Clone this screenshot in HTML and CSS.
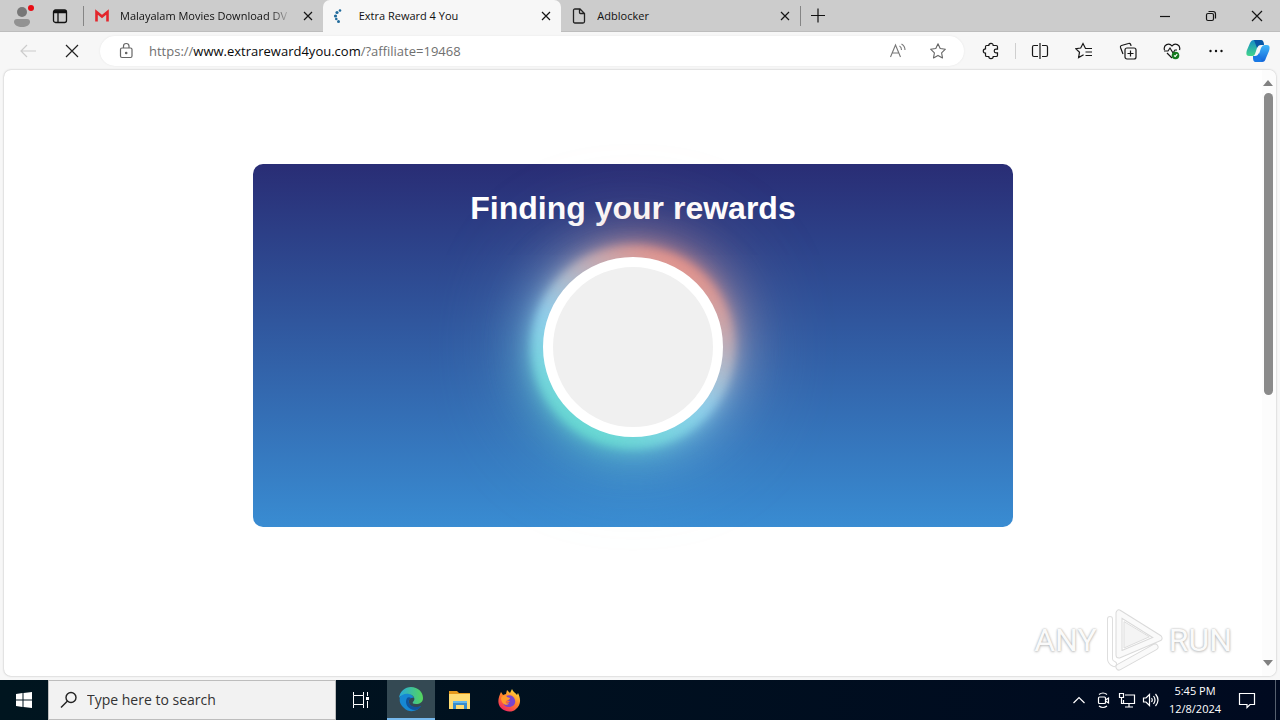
FILE: index.html
```html
<!DOCTYPE html>
<html lang="en">
<head>
<meta charset="utf-8">
<title>Extra Reward 4 You</title>
<link rel="stylesheet" href="styles.css">
</head>
<body>
<header class="tabbar">
  <button class="profile" aria-label="Profile"><svg width="28" height="28" viewBox="0 0 28 28"><circle cx="13" cy="10" r="5" fill="#777"/><path d="M5 20q0-3 3-3h10q3 0 3 3c0 3-4 5-8 5s-8-2-8-5z" fill="#929292"/><circle cx="22" cy="6" r="3" fill="#e80c14"/></svg></button>
  <button class="workspaces" aria-label="Tab actions"><svg width="16" height="16" viewBox="0 0 16 16" fill="none" stroke="#111" stroke-width="1.3"><rect x="1.5" y="2" width="13" height="12.500" rx="2"/><path d="M2 4.500h12M6 5v9" /><path d="M2 3.200h12" stroke-width="2"/></svg></button>
  <span class="divider"></span>
  <nav class="tabs">
    <div class="tab first">
      <svg class="favicon" width="16" height="16" viewBox="0 0 16 16"><path d="M2.500 13.500V4l5.500 4.500L13.500 4v9.500" fill="none" stroke="#e3262c" stroke-width="2.600"/></svg>
      <a class="tab-title faded" href="#">Malayalam Movies Download DV</a>
      <button class="close" aria-label="Close tab"><svg width="10" height="10" viewBox="0 0 10 10"><path d="M1 1l8 8M9 1L1 9"/></svg></button>
    </div>
    <div class="tab active">
      <svg class="favicon" width="16" height="16" viewBox="0 0 16 16" fill="#216b9c"><circle cx="7" cy="2.500" r="1.300"/><circle cx="4" cy="4.500" r="1.600"/><circle cx="2.500" cy="8" r="1.600"/><circle cx="3.300" cy="11" r="1.300"/><circle cx="5.500" cy="13.500" r="1.500"/></svg>
      <a class="tab-title" href="#">Extra Reward 4 You</a>
      <button class="close" aria-label="Close tab"><svg width="10" height="10" viewBox="0 0 10 10"><path d="M1 1l8 8M9 1L1 9"/></svg></button>
    </div>
    <div class="tab last">
      <svg class="favicon" width="16" height="16" viewBox="0 0 16 16" fill="none" stroke="#222" stroke-width="1.300"><path d="M2.500 2.500q0-1.500 1.500-1.500h5l4.500 4.500v8q0 1.500-1.500 1.500h-8q-1.500 0-1.500-1.500zM8.500 1v3.500q0 1 1 1h4"/></svg>
      <a class="tab-title" href="#">Adblocker</a>
      <button class="close" aria-label="Close tab"><svg width="10" height="10" viewBox="0 0 10 10"><path d="M1 1l8 8M9 1L1 9"/></svg></button>
    </div>
  </nav>
  <span class="divider"></span>
  <button class="newtab" aria-label="New tab"><svg width="16" height="16" viewBox="0 0 16 16" stroke="#111" stroke-width="1.200"><path d="M1 7.500h14M8 .5v14"/></svg></button>
  <div class="window-buttons">
    <button aria-label="Minimize"><svg width="12" height="12" viewBox="0 0 12 12"><path d="M1 6.500h10"/></svg></button>
    <button aria-label="Restore"><svg width="12" height="12" viewBox="0 0 12 12"><rect x="1.500" y="3.500" width="7" height="7" rx="1.500"/><path d="M3.500 1.500h4.500q2.500 0 2.500 2.500v4.500"/></svg></button>
    <button aria-label="Close"><svg width="12" height="12" viewBox="0 0 12 12"><path d="M1 1l10 10M11 1L1 11"/></svg></button>
  </div>
</header>

<div class="toolbar">
  <button class="nav-button" aria-label="Back"><svg width="18" height="16" viewBox="0 0 18 16" fill="none" stroke="#ccc" stroke-width="1.200"><path d="M17 8H2M8 2L2 8l6 6"/></svg></button>
  <button class="nav-button" aria-label="Stop"><svg width="14" height="14" viewBox="0 0 14 14" stroke="#222" stroke-width="1.200"><path d="M1 1l12 12M13 1L1 13"/></svg></button>
  <div class="address">
    <svg width="16" height="18" viewBox="0 0 16 18" fill="none" stroke="#666" stroke-width="1.200"><rect x="2.500" y="6" width="11.500" height="9.500" rx="1.500"/><path d="M5.500 6V4q0-2.500 2.700-2.500T11 4v2"/><circle cx="8.200" cy="11" r=".7" fill="#555"/></svg>
    <a class="url" href="#">https://<span>www.extrareward4you.com</span>/?affiliate=19468</a>
    <button aria-label="Read aloud"><svg width="18" height="18" viewBox="0 0 18 18" fill="none" stroke="#777" stroke-width="1.100"><path d="M1.500 15L6.500 3l5 12M3.300 11h6.400M10.500 4q2 1 2 4M12.500 2q3.500 2 3.500 6"/></svg></button>
    <button aria-label="Add to favorites"><svg width="18" height="18" viewBox="0 0 18 18" fill="none" stroke="#666" stroke-width="1.100" stroke-linejoin="round"><path d="M9 1.800l2.200 4.700 5.200.7-3.800 3.600.9 5.100L9 13.400l-4.500 2.500.9-5.100-3.800-3.600 5.200-.7z"/></svg></button>
  </div>
  <div class="tools">
    <button aria-label="Extensions"><svg width="18" height="18" viewBox="0 0 18 18"><path d="M4.500 3.500h2.300a2.200 2.200 0 0 1 4.400 0h3q1.300 0 1.300 1.300v2.400h-1.500a1.800 1.800 0 0 0 0 3.600h1.500v2.400q0 1.300-1.300 1.300h-3a2.200 2.200 0 0 1-4.400 0H4.800q-1.300 0-1.300-1.300v-2a2.200 2.200 0 0 1 0-4.400v-2q0-1.300 1-1.300z"/></svg></button>
    <span class="tool-divider"></span>
    <button aria-label="Split screen"><svg width="18" height="18" viewBox="0 0 18 18"><path d="M7 3.500H3Q1.500 3.500 1.500 5v8q0 1.500 1.500 1.500h4M11 3.500h4q1.500 0 1.500 1.500v8q0 1.500-1.500 1.500h-4M9 1v16"/></svg></button>
    <button aria-label="Favorites"><svg width="18" height="18" viewBox="0 0 18 18"><path d="M12 6.500h-1.500L8 1.500 5.700 6l-5 .7 3.800 3.500-.9 5.300 5-2.800M10.500 6.500H17M10.500 10H17M10.500 13.500H17"/></svg></button>
    <button aria-label="Collections"><svg width="18" height="18" viewBox="0 0 18 18"><path d="M4 12L1.500 5.500q-.5-1.500 1-2l7-2q1.500-.5 2.200 1L12 4"/><rect x="6" y="6" width="11" height="11" rx="2"/><path d="M11.500 8.500v6M8.500 11.500h6"/></svg></button>
    <button aria-label="Browser essentials"><svg width="18" height="18" viewBox="0 0 18 18"><path d="M1.500 8C0 3 6 0 9 4c3-4 9-1 7.500 4M1 9h4l2-3 3 5 2-3h2M4 11l5 5"/><circle cx="12.500" cy="13.500" r="3.800" fill="#147a1e" stroke="none"/><path d="M11 13.500l1.200 1 2-2.300" stroke="#fff"/></svg></button>
    <button aria-label="Settings and more"><svg width="18" height="18" viewBox="0 0 18 18"><g fill="#111" stroke="none"><circle cx="3.500" cy="9" r="1.200"/><circle cx="9" cy="9" r="1.200"/><circle cx="14.500" cy="9" r="1.200"/></g></svg></button>
    <button class="copilot" aria-label="Copilot"><svg width="26" height="26" viewBox="0 0 26 26"><defs><linearGradient id="ca" x1="0" y1="0" x2="0" y2="1"><stop offset="0" stop-color="#148bc5"/><stop offset="1" stop-color="#42d68b"/></linearGradient><linearGradient id="cb" x1="0" y1="0" x2="0" y2="1"><stop offset="0" stop-color="#40b7fa"/><stop offset="1" stop-color="#1262d8"/></linearGradient></defs><path fill="url(#ca)" stroke="none" d="M9 2h8c-3 1-4 4-5 8l-2 6c-1 2-2 2-4 2H4c-3 0-3-3-2-6l3-7c1-2 2-3 4-3z"/><path fill="#0756a5" stroke="none" d="M9 2h7c2 0 3 2 3 5h-3c-2 0-3 1-4 3z"/><path fill="url(#cb)" stroke="none" d="M17 24H9c3-1 4-4 5-8l2-6c1-2 2-3 4-3h2c3 0 3 3 2 6l-3 7c-1 3-2 4-4 4z"/><path fill="#1979e5" stroke="none" d="M17 24h-6c-3 0-3-3-3-6h2c2 0 3-1 4-3z"/></svg></button>
  </div>
</div>

<div class="viewport">
  <main class="page">
    <section class="card">
      <h1>Finding your rewards</h1>
      <div class="loader"><span class="glow near"></span><span class="glow soft"></span><span class="glow wide"></span><span class="glow far"></span><span class="disc"></span></div>
    </section>
  </main>
  <div class="scrollbar">
    <svg width="10" height="6" viewBox="0 0 10 6"><path d="M0 6l5-6 5 6z"/></svg>
    <span class="track"><span class="thumb"></span></span>
    <svg width="10" height="6" viewBox="0 0 10 6"><path d="M0 0l5 6 5-6z"/></svg>
  </div>
  <div class="watermark"><span>ANY</span><svg width="60" height="66" viewBox="0 0 60 66"><g fill="none" stroke-linejoin="round" stroke-linecap="round"><path d="M7 12v40q0 3 4 5" stroke="#dedede" stroke-width="6"/><path d="M7 12v40q0 3 4 5" stroke="#fff" stroke-width="4"/><path d="M16 6v42l40-17zM16 60l36-20" stroke="#dadada" stroke-width="7"/><path d="M16 6v42l40-17zM16 60l36-20" stroke="#fafafa" stroke-width="5"/><path d="M21 15v26l25-11z" fill="#f4f4f4" stroke="#ddd"/></g></svg><span>RUN</span></div>
</div>

<footer class="taskbar">
  <button class="task start" aria-label="Start"><svg width="16" height="16" viewBox="0 0 16 16" fill="#fff"><path d="M0 2l6.500-1v6.500H0zM7.500 1L16 0v7.500H7.500zM0 8.500h6.500V15L0 14zM7.500 8.500H16V16l-8.500-1z"/></svg></button>
  <label class="search"><svg width="18" height="18" viewBox="0 0 18 18" fill="none" stroke="#222" stroke-width="1.400"><circle cx="11" cy="6.500" r="5"/><path d="M7.500 10L1 16.500"/></svg><input type="text" aria-label="Search" placeholder="Type here to search"></label>
  <button class="task view" aria-label="Task view"><svg width="18" height="18" viewBox="0 0 18 18" fill="none" stroke="#fff"><path d="M1.500 1v3.500h10V1M1.500 17v-3.500h10V17M1.500 4.500v9M11.500 4.500v9M15.500 1v4M15.500 10v7"/><path d="M14 6h3v3h-3z" fill="#fff" stroke="none"/></svg></button>
  <button class="task current" aria-label="Edge"><svg width="26" height="26" viewBox="0 0 26 26"><defs><linearGradient id="ea" x1="0" y1="0" x2="1" y2="0"><stop offset="0" stop-color="#27a9dd"/><stop offset="1" stop-color="#55d65b"/></linearGradient></defs><path fill="#1688d3" d="M2 11C5 5 13 6 16 12c-4-1-6 2-5 5 1 4 6 6 12 3-4 6-12 7-17 2-4-3-5-7-4-11z"/><path fill="#10549d" d="M9 12c-3 5 1 12 8 12 3 0 5-2 6-4-5 2-10 1-12-3-1-2 0-4 2-5-1-1-3-1-4 0z"/><path fill="url(#ea)" d="M1 12C2 5 7 1 13 1c7 0 12 5 12 11 0 4-3 6-7 6-3 0-4-1-3-2 3-3 1-7-4-8-4-1-8 1-10 4z"/></svg></button>
  <button class="task" aria-label="File Explorer"><svg width="24" height="24" viewBox="0 0 24 24"><path fill="#e69a1c" d="M1 3h8l2 2h11v3H1z"/><path fill="#ffdc73" d="M1 6h21v15H1z"/><path fill="#398dcc" d="M5 13h14v8h-3v-4H8v4H5z"/><path fill="#65b9ed" d="M5 13h14v2H5z"/></svg></button>
  <button class="task" aria-label="Firefox"><svg width="24" height="24" viewBox="0 0 24 24"><defs><linearGradient id="fa" x1=".8" y1="0" x2=".2" y2="1"><stop offset="0" stop-color="#ffe13c"/><stop offset=".5" stop-color="#ff7d2a"/><stop offset="1" stop-color="#f01c68"/></linearGradient></defs><path fill="url(#fa)" d="M4 4l2 3 3-1 1-4 3 3 2-4c1 3 4 4 5 6l1-2c3 6 3 12-2 16-4 4-11 3-15-1-4-4-3-10 0-16z"/><path fill="#7944cc" d="M9 8c4-2 8 0 9 4s-2 7-6 7-6-2-5-5c2 2 5 1 6-1-3 0-5-1-4-5z"/><path fill="#ff9c2c" d="M4 10c2-3 5-3 6-1l3 1c0 2-3 2-4 3-1 2 1 3 3 2-2 4-8 1-8-5z"/></svg></button>
  <div class="tray">
    <button class="tray-icon" aria-label="Show hidden icons"><svg width="14" height="18" viewBox="0 0 14 18"><path d="M1.500 12L7 6.500l5.500 5.500"/></svg></button>
    <button class="tray-icon" aria-label="Meet now"><svg width="14" height="18" viewBox="0 0 14 18"><rect x="2.500" y="6" width="7" height="6.500" rx="1"/><path d="M9.500 9l3-2v5l-3-2M3 3.500q4-3 8 0M3 15q4 3 8 0"/></svg></button>
    <button class="tray-icon" aria-label="Network"><svg width="18" height="18" viewBox="0 0 18 18"><path d="M7 4h9.500v8.500h-11V9M11 12.500V16M7 16h8M1.500 2.500h4v4h-4zM3.500 6.500v6h2"/></svg></button>
    <button class="tray-icon" aria-label="Volume"><svg width="18" height="18" viewBox="0 0 18 18"><path d="M1.500 7v4h2.500l3.500 3.500v-11L4 7zM9.500 7q1.500 2 0 4M11.500 5q3 4 0 8M13.500 3q5 6 0 12"/></svg></button>
    <time class="clock"><span>5:45 PM</span><span>12/8/2024</span></time>
    <button class="tray-icon notice" aria-label="Notifications"><svg width="18" height="18" viewBox="0 0 18 18"><path d="M1.500 2.500h15v11H12l-3 3v-3H1.500z"/></svg></button>
    <span class="desktop-edge"></span>
  </div>
</footer>
</body>
</html>
```
FILE: styles.css
```css
* { box-sizing: border-box; }
body { margin: 0; height: 100vh; display: flex; flex-direction: column; overflow: hidden; background: #f7f7f7; color: #111; font-family: "Open Sans", "Noto Sans", sans-serif; }
button { border: 0; padding: 0; background: transparent; color: inherit; font: inherit; display: flex; align-items: center; justify-content: center; flex: none; }
svg { display: block; flex: none; }
a { color: inherit; text-decoration: none; }

.tabbar { height: 32px; flex: none; display: flex; align-items: center; background: #cccccc; border-bottom: 1px solid #bdbdbd; }
.profile { width: 46px; }
.workspaces { width: 28px; }
.divider { width: 1px; height: 20px; background: #858585; flex: none; }
.workspaces + .divider { margin-left: 9px; }
.tabs { display: flex; align-self: stretch; flex: 0 1 716px; min-width: 0; }
.tab { flex: 1 1 240px; min-width: 0; display: flex; align-items: center; padding: 0 8px 0 10px; font-size: 11px; }
.tab.active { height: 32px; background: #f7f7f7; border-radius: 7px 7px 0 0; }
.tab .favicon { margin-right: 10px; }
.tab-title { flex: 1; min-width: 0; overflow: hidden; white-space: nowrap; line-height: 16px; }
.faded { margin-right: 10px; -webkit-mask-image: linear-gradient(90deg, #000 88%, transparent); mask-image: linear-gradient(90deg, #000 88%, transparent); }
.close { width: 14px; height: 20px; }
.close path, .window-buttons path, .window-buttons rect { fill: none; stroke: #151515; stroke-width: 1.2; }
.newtab { width: 34px; height: 30px; }
.window-buttons { display: flex; margin-left: auto; }
.window-buttons button { width: 46px; height: 31px; }

.toolbar { height: 38px; flex: none; display: flex; align-items: center; padding-left: 6px; }
.nav-button { width: 44px; height: 32px; }
.address { flex: 1; min-width: 0; height: 30px; margin-left: 6px; padding: 0 17px 0 18px; display: flex; align-items: center; border-radius: 15px; background: #fff; box-shadow: 0 0 2px #e4e4e4; }
.url { flex: 1; min-width: 0; margin-left: 15px; color: #707070; font-size: 13px; line-height: 20px; white-space: nowrap; overflow: hidden; }
.url span { color: #080808; }
.address button + button { margin-left: 22px; }
.tools { display: flex; align-items: center; padding: 0 2px 0 5px; }
.tools button { width: 44px; height: 32px; }
.tools svg { fill: none; stroke: #171717; stroke-width: 1.2; }
.tool-divider { width: 1px; height: 16px; margin: 0 2px; background: #cfcfcf; }
.tools .copilot { width: 40px; }

.viewport { flex: 1; min-height: 0; position: relative; display: flex; margin: 0 4px 4px; background: #fff; border-radius: 7px; box-shadow: 0 0 2px #aaa; overflow: hidden; }
.page { flex: 1; display: flex; align-items: flex-start; justify-content: center; padding-top: 94px; }
.card { width: 760px; max-width: 96%; padding: 24px 20px 80px; display: flex; flex-direction: column; align-items: center; gap: 19px; border-radius: 10px; background: linear-gradient(#292d75, #398cd2); }
h1 { margin: 0; color: #fff; font: bold 32px/40px "Liberation Sans", Arial, sans-serif; }
.loader { width: 200px; height: 200px; display: grid; place-items: center; }
.glow, .disc { grid-area: 1 / 1; border-radius: 50%; }
.glow { width: 200px; height: 200px; background: linear-gradient(210deg, #f08a7c 15%, #8ed1f4 55%, #5fdacb 85%); }
.near { filter: blur(5px); }
.soft { filter: blur(10px); opacity: .8; }
.wide { filter: blur(25px); opacity: .8; }
.far { filter: blur(50px); opacity: .5; }
.disc { position: relative; width: 180px; height: 180px; background: #f0f0f0; border: 10px solid #fff; }
.scrollbar { width: 14px; flex: none; display: flex; flex-direction: column; align-items: center; gap: 7px; padding: 10px 2px 10px 0; background: #fcfcfc; }
.scrollbar svg { fill: #818181; }
.track { flex: 1; }
.thumb { display: block; width: 9px; height: 54%; border-radius: 5px; background: #8a8a8a; }
.watermark { position: absolute; right: 44px; bottom: 3px; display: flex; align-items: center; gap: 6px; color: #fafafa; font: 32px/40px Roboto, "Open Sans", sans-serif; text-shadow: 0 0 2px #aaa, 0 1px 3px #ccc; }

.taskbar { height: 40px; flex: none; display: flex; align-items: stretch; background: linear-gradient(90deg, #00151f, #000a20); color: #fff; }
.task { width: 49px; }
.task.start { width: 48px; }
.task.current { width: 48px; background: #344953; border-bottom: 2px solid #76b9ed; }
.task.view { margin-right: 2px; }
.search { flex: 0 1 288px; display: flex; align-items: center; padding: 0 11px; gap: 9px; background: #f2f2f2; border: 1px solid #bdbdbd; }
.search input { flex: 1; min-width: 0; border: 0; padding: 0; background: transparent; color: #333; font: 14px/20px "Open Sans", "Noto Sans", sans-serif; outline: 0; }
.search input::placeholder { color: #333; opacity: 1; }
.tray { margin-left: auto; display: flex; align-items: center; }
.tray-icon { width: 24px; height: 40px; }
.tray-icon svg { fill: none; stroke: #fff; stroke-width: 1.2; }
.clock { width: 64px; display: flex; flex-direction: column; align-items: center; font-size: 11px; line-height: 18px; }
.notice { width: 40px; }
.desktop-edge { width: 5px; height: 40px; margin-left: 8px; border-left: 1px solid #56606f; }
```
